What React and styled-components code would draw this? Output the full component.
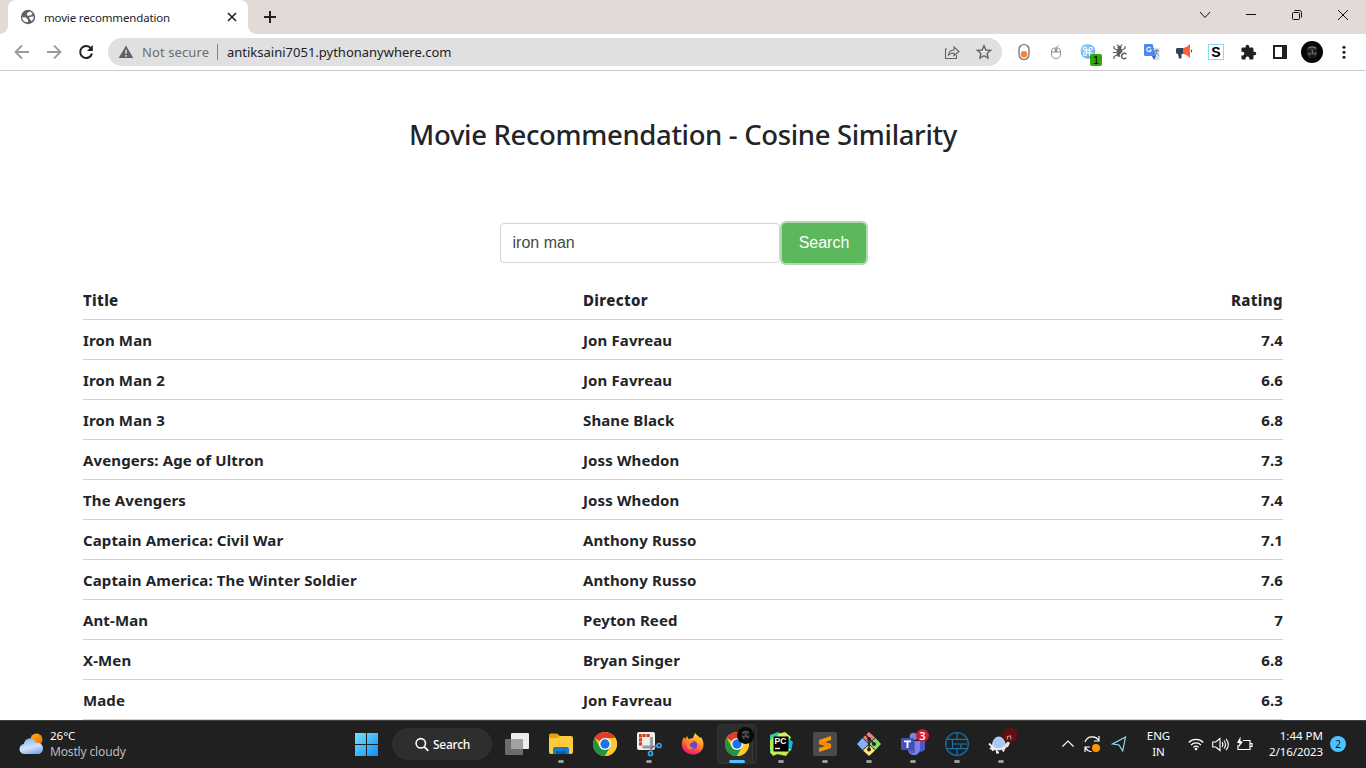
import React from 'react';
import styled, { createGlobalStyle } from 'styled-components';

const GlobalStyle = createGlobalStyle`
  *, *::before, *::after { box-sizing: border-box; }
  body { margin: 0; overflow: hidden; background: #fff; }
`;

const ui = `"Segoe UI", "Noto Sans", "Open Sans", sans-serif`;

const Screen = styled.div`
  display: flex;
  flex-direction: column;
  width: 1366px;
  height: 768px;
  overflow: hidden;
  font-family: ${ui};
  color: #212529;
`;

const Label = styled.span`
  font-size: ${(p) => p.$size || 12}px;
  font-weight: ${(p) => p.$weight || 400};
  letter-spacing: ${(p) => p.$track || 0}px;
  color: ${(p) => p.$color || 'inherit'};
  white-space: nowrap;
`;

/* ---------- browser chrome ---------- */

const TabStrip = styled.div`
  display: flex;
  height: 34px;
  flex: none;
  padding-left: 8px;
  background: #e3dad7;
`;

const Tab = styled.div`
  position: relative;
  display: flex;
  align-items: center;
  width: 240px;
  padding: 0 10px 0 12px;
  background: #fff;
  border-radius: 8px 8px 0 0;
  &::before, &::after {
    content: '';
    position: absolute;
    bottom: 0;
    width: 8px;
    height: 8px;
  }
  &::before { left: -8px; background: radial-gradient(circle at 0 0, transparent 7.5px, #fff 8px); }
  &::after { right: -8px; background: radial-gradient(circle at 100% 0, transparent 7.5px, #fff 8px); }
`;

const TabTitle = styled.div`
  flex: 1;
  padding: 0 0 1px 8px;
  line-height: 16px;
`;

const NewTab = styled.div`
  display: grid;
  place-items: center;
  width: 44px;
`;

const WindowControls = styled.div`
  display: flex;
  height: 29px;
  margin-left: auto;
`;

const ControlSlot = styled.div`
  display: grid;
  place-items: center;
  width: 46px;
`;

const Toolbar = styled.div`
  display: flex;
  align-items: center;
  height: 37px;
  flex: none;
  padding-left: 6px;
  background: #fff;
  border-bottom: 1px solid #c8c8c8;
`;

const Slot = styled.div`
  position: relative;
  display: grid;
  place-items: center;
  width: 32px;
  height: 32px;
`;

const AddressBar = styled.div`
  display: flex;
  align-items: center;
  width: 894px;
  height: 28px;
  margin: 0 6px;
  padding: 0 2px 0 10px;
  border-radius: 14px;
  background: #e0e0e0;
`;

const SecurityChip = styled.div`
  display: flex;
  align-items: center;
  width: 100px;
  height: 16px;
  gap: 8px;
  border-right: 1px solid #85868a;
`;

const Url = styled.div`
  flex: 1;
  padding: 0 0 2px 9px;
`;

const CountBadge = styled.span`
  position: absolute;
  left: 18px;
  top: 18px;
  width: 12px;
  height: 12px;
  border-radius: 2px;
  background: #35a30d;
  color: #000;
  font: 11px/12px "Liberation Sans", sans-serif;
  text-align: center;
`;

const LetterTile = styled.div`
  display: grid;
  place-items: center;
  width: 16px;
  height: 16px;
  border: 1px solid #86dcf5;
  background: #fff;
  color: #000;
  font: bold 14px/14px "Liberation Sans", sans-serif;
`;

/* ---------- page ---------- */

const Page = styled.main`
  flex: 1;
  display: flex;
  flex-direction: column;
  align-items: center;
  min-height: 0;
  overflow: hidden;
`;

const Heading = styled.h1`
  margin: 47px 0 0;
  height: 34px;
  font-size: 27.5px;
  line-height: 34px;
  font-weight: 500;
  letter-spacing: -0.34px;
  white-space: nowrap;
`;

const SearchForm = styled.form`
  display: flex;
  gap: 2px;
  margin: 71px 0 17px;
`;

const SearchInput = styled.input`
  width: 280px;
  height: 40px;
  padding: 0 12px;
  border: 1px solid #d4d4d4;
  border-radius: 4px;
  outline: none;
  background: #fff;
  color: #464a4c;
  font: 16px "Liberation Sans", Arial, sans-serif;
`;

const SearchButton = styled.button`
  width: 84px;
  height: 40px;
  margin-right: 1px;
  padding: 0 0 0 1px;
  border: 1px solid #5cb85c;
  border-radius: 4px;
  background: #5cb85c;
  box-shadow: 0 0 0 2px rgba(92, 184, 92, 0.5);
  color: #fff;
  font: 16px "Liberation Sans", Arial, sans-serif;
`;

const Table = styled.div`
  width: 1200px;
`;

const TableRow = styled.div`
  display: grid;
  grid-template-columns: 500px 500px 200px;
  height: 40px;
  border-bottom: 1px solid #cfd0d1;
  font-size: 15px;
  line-height: 40px;
  font-weight: ${(p) => (p.$head ? 800 : 700)};
  letter-spacing: ${(p) => (p.$head ? 0.34 : 0.12)}px;
  white-space: nowrap;
`;

const Cell = styled.div`
  text-align: ${(p) => (p.$right ? 'right' : 'left')};
`;

/* ---------- taskbar ---------- */

const Taskbar = styled.footer`
  display: flex;
  align-items: stretch;
  height: 48px;
  flex: none;
  background: #202020;
  border-top: 1px solid #424242;
  color: #fff;
`;

const Weather = styled.div`
  display: flex;
  align-items: center;
  width: 344px;
  gap: 6px;
  padding: 0 0 1px 19px;
`;

const Stack = styled.div`
  display: flex;
  flex-direction: column;
  align-items: ${(p) => p.$align || 'flex-start'};
  line-height: 16px;
`;

const AppSlot = styled.div`
  position: relative;
  display: grid;
  place-items: center;
  width: 44px;
  height: 47px;
  padding-bottom: 1px;
  &::after {
    content: '';
    position: absolute;
    bottom: 5px;
    left: ${(p) => (p.$active ? 14 : 19)}px;
    width: ${(p) => (p.$active ? 16 : 6)}px;
    height: 3px;
    border-radius: 2px;
    background: ${(p) => (p.$active ? '#4cc2ff' : '#9a9a9a')};
    display: ${(p) => (p.$running || p.$active ? 'block' : 'none')};
  }
`;

const ActivePlate = styled.div`
  position: absolute;
  left: 2px;
  top: 3px;
  width: 40px;
  height: 40px;
  border: 1px solid #343434;
  border-radius: 4px;
  background: linear-gradient(90deg, #2d2d2d 34px, #383838 34px, #383838 35px, #272727 35px);
`;

const Art = styled.svg`
  position: relative;
  display: block;
  overflow: visible;
`;

const SearchPill = styled.div`
  display: flex;
  align-items: center;
  justify-content: center;
  gap: 4px;
  width: 100px;
  height: 32px;
  margin: 7px 3px 0 4px;
  border-radius: 16px;
  background: #2e2e2e;
`;

const AlertBadge = styled.span`
  position: absolute;
  left: 25px;
  top: 8px;
  width: 13px;
  height: 13px;
  border-radius: 50%;
  background: #d01a37;
  color: #fff;
  font-size: 11px;
  font-weight: 600;
  line-height: 13px;
  text-align: center;
`;

const Tray = styled.div`
  display: flex;
  align-items: center;
  margin-left: auto;
  padding: 0 20px 1px 0;
`;

const TraySlot = styled.div`
  display: grid;
  place-items: center;
  width: ${(p) => p.$w}px;
`;

const Clock = styled.div`
  display: flex;
  justify-content: flex-end;
  width: 66px;
`;

const NoticeCount = styled.span`
  width: 16px;
  height: 16px;
  margin-left: 7px;
  border-radius: 50%;
  background: #4cc2ff;
  color: #111;
  font-size: 10px;
  line-height: 16px;
  text-align: center;
`;

/* ---------- drawings ---------- */

const Svg = ({ w = 16, h, box, children, ...rest }) => (
  <Art width={w} height={h || w} viewBox={box || `0 0 ${w} ${h || w}`} fill="none" {...rest}>
    {children}
  </Art>
);

const Globe = () => (
  <Svg w={16}>
    <circle cx="8" cy="8" r="7.2" fill="#5f6368" />
    <path d="M2 8.300h3c1.500 0 1.500 2 3 2.200v2.700c-3.200.4-5.800-1.700-6-4.900zM7 5.300c0-1.700 1.200-2.600 3.500-2.500.8.500 1.600 1.200 2 2L11 6.200H9.500c-.3 1.300-2.500.8-2.500-.9zM9 8.300l3.500-.8h1.300c.1 2-.9 3.700-2.400 4.700-.2-1.700-2.300-1.600-2.400-3.900z" fill="#fff" />
  </Svg>
);

const Chrome = () => (
  <Svg w={24} box="0 0 48 48">
    <circle cx="24" cy="24" r="24" fill="#fbc116" />
    <path d="M24 24 3.200 12A24 24 0 0 1 44.800 12H24z" fill="#e33b2e" />
    <path d="M3.200 12A24 24 0 0 0 24 48l10.400-18L24 24 13.600 30z" fill="#229342" />
    <path d="M24 12h20.800A24 24 0 0 1 24 48l10.400-18z" fill="#fcc934" />
    <circle cx="24" cy="24" r="12" fill="#fff" />
    <circle cx="24" cy="24" r="9.300" fill="#1a73e8" />
  </Svg>
);

const Face = ({ size }) => (
  <Svg w={size} box="0 0 22 22">
    <circle cx="11" cy="11" r="11" fill="#070707" />
    <path d="M6 7c2-2.500 7-2.800 10 0l.3 5.500c-.7 2.500-2 4.700-5 5-3.200-.3-4.600-2.500-5.100-5.500z" fill="#333" />
    <path d="M6.500 9.800l3.500.6M12.500 10.400l3.500-.7" stroke="#080808" strokeWidth="1.300" />
    <path d="M7.500 6.900l3.500-1 4 1M11.400 9.500v3.800M7 12.500l2.300.8M13 13l2-.5" stroke="#858585" strokeWidth=".9" />
    <path d="M9 14.500c1.500-.7 3.500-.7 5 0l-.8 2.700h-3z" fill="#111" />
  </Svg>
);

const extensions = [
  <Svg w={16} h={18} key="toggle">
    <rect x="3" y="1.500" width="10" height="15" rx="5" fill="#fff" stroke="#666" strokeWidth="1.200" />
    <circle cx="8" cy="11.300" r="3.300" fill="#f58233" />
  </Svg>,
  <Svg w={16} key="mouse">
    <path d="M3.500 6.500c0-1.600 1.500-2.500 4.500-2.500s4.500.9 4.500 2.500V10c0 3-2 4.700-4.500 4.700S3.500 13 3.500 10zM3.500 8h9M8 4v4M8 4c0-1.500 2.500-1 2.500-2.500M7 5.500h2v2H7z" stroke="#777" strokeWidth=".8" />
  </Svg>,
  <Svg w={16} key="command">
    <circle cx="8" cy="7.500" r="7.300" fill="#6cb9ee" />
    <circle cx="5.500" cy="5" r="5" fill="#99d4fa" opacity=".55" />
    <path d="M6.500 6V4.700A1.500 1.500 0 1 0 5 6.200h6a1.500 1.500 0 1 0-1.500-1.500v4.600A1.500 1.500 0 1 0 11 8.800H5a1.500 1.500 0 1 0 1.500 1.500z" stroke="#fff" strokeWidth="1.100" />
  </Svg>,
  <Svg w={16} key="bug">
    <ellipse cx="7.500" cy="8.500" rx="3" ry="4.500" fill="#665d55" />
    <circle cx="7.500" cy="3.500" r="2" fill="#665d55" />
    <path d="M5 6 2 4.500V2M4.500 8.500H.8M5 11l-3 1.500V15M10 6l3-1.500V2M10 8.500h4M6 2 5 .5M9 2l1-1.500" stroke="#665d55" strokeWidth="1.200" />
    <path d="M14.500 10.300a2.800 2.800 0 1 0 0 3.500" stroke="#fff" strokeWidth="3.500" />
    <path d="M14.300 10.300a2.700 2.700 0 1 0 0 3.500" stroke="#665d55" strokeWidth="1.500" />
  </Svg>,
  <Svg w={16} key="translate">
    <path d="M6 4h9.500v12H10z" fill="#d8dbe0" />
    <path d="M1 0h7.500l3.500 12H1a1 1 0 0 1-1-1V1a1 1 0 0 1 1-1z" fill="#4b89f2" />
    <path d="m8 12h4l-2.200 4z" fill="#2762ce" />
    <path d="M6.800 4.200a2.200 2.200 0 1 0 .3 2H5.200" stroke="#fff" strokeWidth="1.100" />
    <path d="M11 6.500h4M13 5.300v1.200c0 2-1 3.700-2 4.500M11.500 7c.7 2 1.800 3.300 3 4.200" stroke="#6e8298" />
  </Svg>,
  <Svg w={18} key="megaphone">
    <path d="M1 6.500C1 5.300 2 5 3 5h5v6H6.500v4.500H4L3 11C1.500 11 1 10 1 9z" fill="#2e4358" />
    <path d="M8 5c3-.2 4.500-2 7-4v14c-2.500-2-4-3.800-7-4z" fill="#fb6435" />
    <path d="M16 6.500c1.600 0 1.600 3 0 3z" fill="#2e4358" />
  </Svg>,
  <LetterTile key="s">S</LetterTile>,
  <Svg w={17} box="0 0 24 24" key="puzzle">
    <path d="M20.500 11H19V7a2 2 0 0 0-2-2h-4V3.500a2.500 2.500 0 0 0-5 0V5H4a2 2 0 0 0-2 2v3.800h1.500a2.700 2.700 0 0 1 0 5.400H2V20a2 2 0 0 0 2 2h3.800v-1.500a2.700 2.700 0 0 1 5.400 0V22H17a2 2 0 0 0 2-2v-4h1.500a2.500 2.500 0 0 0 0-5z" fill="#202124" />
  </Svg>,
  <Svg w={14} key="panel">
    <rect x="1" y="1" width="12" height="12" stroke="#202124" strokeWidth="2" />
    <path d="M9 1h4v12H9z" fill="#202124" />
  </Svg>,
  <Face size={22} key="profile" />,
  <Svg w={4} h={16} key="menu">
    <g fill="#202124"><circle cx="2" cy="3.300" r="1.550" /><circle cx="2" cy="8.300" r="1.550" /><circle cx="2" cy="13.300" r="1.550" /></g>
  </Svg>,
];

const apps = [
  { id: 'folder', running: true, art: (
    <Svg w={24}>
      <path d="M0 3.500C0 2 1 1.500 2 1.500h6l2.500 2V8H0z" fill="#e8a20c" />
      <path d="M0 6h8.500l2-2H22q2 0 2 2v14q0 2-2 2H2q-2 0-2-2z" fill="#ffcb3d" />
      <path d="M4 22v-5q0-2 2-2h12q2 0 2 2v5z" fill="#137bcd" />
      <path d="M7 19h10v3H7z" fill="#0a5ca5" />
    </Svg>) },
  { id: 'chrome', art: <Chrome /> },
  { id: 'snip', running: true, art: (
    <Svg w={26} h={24}>
      <rect x="1" y="0" width="18" height="18" rx="2" fill="#eeeeee" />
      <path d="M4.500 13.500V3.500H14" stroke="#d83b12" strokeWidth="3" strokeDasharray="3.200 .8" />
      <path d="M15.500 5v10h-9" stroke="#9a9a9a" strokeWidth="3" />
      <path d="m15 15 6-1M15.500 15l-.5 5" stroke="#747d84" strokeWidth="2" />
      <circle cx="23" cy="13.500" r="2" stroke="#2da5ec" strokeWidth="1.700" />
      <circle cx="14.500" cy="21.500" r="2" stroke="#2da5ec" strokeWidth="1.700" />
    </Svg>) },
  { id: 'firefox', art: (
    <Svg w={24}>
      <defs>
        <linearGradient id="fire" x1="18" y1="1" x2="8" y2="23" gradientUnits="userSpaceOnUse">
          <stop stopColor="#ffe14c" /><stop offset=".4" stopColor="#ff9a24" /><stop offset=".75" stopColor="#ff3f4a" /><stop offset="1" stopColor="#e31587" />
        </linearGradient>
      </defs>
      <path d="M3 5l1.300 2L6 4l1.500 3L12 6l2-5c1 2 4 3 5 5l1-1c4 6 3 12-1 15-5 4-12 3-15.500-1S0 10 3 5z" fill="url(#fire)" />
      <circle cx="12" cy="13" r="4.300" fill="#7540cf" />
      <path d="M5 9c3-2 5 0 8 0-1 2-3 1.500-4 3-1 2 1 4 3.500 3.500-4 4-8 0-7.500-6.500z" fill="#ff8a2b" />
    </Svg>) },
  { id: 'browser', active: true, art: <Chrome /> },
  { id: 'pycharm', running: true, art: (
    <Svg w={24}>
      <path d="m1 3 8-3 7 4-1 9-8 10-6-2z" fill="#2ec99b" />
      <path d="m9 2 7-2 6 5-2 4H8z" fill="#d8ee53" />
      <path d="m19 6 5 4-2 9-5-2z" fill="#18b7dd" />
      <path d="m1 20 5-5 16 2-5 7-9-2-4 2z" fill="#c3ec56" />
      <path d="m1 9 4-6v15H1z" fill="#b3ea50" />
      <path d="M4.500 4.500h15v15h-15z" fill="#000" />
      <text x="5.500" y="12" fill="#fff" fontFamily="Liberation Sans" fontWeight="700" fontSize="8.500">PC</text>
      <path d="M6 16.500h5" stroke="#fff" strokeWidth="1.300" />
    </Svg>) },
  { id: 'sublime', running: true, art: (
    <Svg w={24}>
      <rect width="24" height="24" rx="2" fill="#4b4b4b" />
      <path d="m6 8 12-4v4l-6.500 2L18 12v4L6 20v-4l6.500-2L6 12z" fill="#ff9800" />
      <path d="m6 8 12 4v4L6 12z" fill="#f08c00" />
    </Svg>) },
  { id: 'git', running: true, art: (
    <Svg w={24}>
      <path d="m12 0 6 5.500-6 6-6-6z" fill="#f08080" />
      <path d="m5.500 6 6 6-6 6L0 12z" fill="#80b3ff" />
      <path d="m18.500 6L24 12l-5.500 6-6-6z" fill="#87de64" />
      <path d="m12 12.500 6 6L12 24l-6-5.500z" fill="#ffe680" />
      <path d="M7.500 1.500 12 6.500v11M12 6.500l5 5.500" stroke="#2b2422" strokeWidth="1.600" />
      <circle cx="12" cy="7" r="2" fill="#2b2422" /><circle cx="17" cy="12" r="2" fill="#2b2422" /><circle cx="12" cy="17.500" r="2" fill="#2b2422" />
    </Svg>) },
  { id: 'teams', running: true, badge: '3', art: (
    <Svg w={24}>
      <circle cx="12.500" cy="4.500" r="3.800" fill="#7b83eb" />
      <path d="M17 9h7v8q-2 4-6 2z" fill="#5059c9" />
      <path d="M7 9h12v8c0 8-12 8-12 0z" fill="#7b83eb" />
      <path d="M7 9h7v12c-4 1-7-1-7-5z" fill="#555ec2" />
      <rect y="6" width="13" height="12" rx="1" fill="#4350b8" />
      <path d="M3 9.300h7M6.500 9v7" stroke="#fff" strokeWidth="1.800" />
    </Svg>) },
  { id: 'web', running: true, art: (
    <Svg w={24}>
      <circle cx="12" cy="12" r="11.300" stroke="#1672ad" strokeWidth="1.300" />
      <path d="M2 7.300h20M7.500 12H22.500M2 16.700h20M7.500 7.300v9.400M16 12v4.700M12 1v6.300M12 16.700V23" stroke="#1672ad" strokeWidth="1.200" />
    </Svg>) },
  { id: 'turtle', running: true, art: (
    <Svg w={28} h={24}>
      <path d="M5 14h14l-1 4-3-1-2 1.500-3-1-4 1-2-2z" fill="#f3f2ef" />
      <path d="M7 16.500 5 18.500M9.500 17l.5 3.500h2M15 17l2 2.500M2 11.500l3.500 3.500M3 17l3-2" stroke="#f4f2ee" strokeWidth="1.900" />
      <path d="M5.500 14c0-12 12-12 13 0l-5 2.500H9z" fill="#a8c8fb" stroke="#e8eefb" strokeWidth=".8" />
      <path d="m17 14 4-5 2 2-2 4-3 1z" fill="#e9e4dd" />
      <circle cx="23" cy="3" r="7.300" fill="#650e12" />
      <path d="M20.500 7.500V4.500l3-.5.500 3.500" stroke="#a58f98" strokeWidth="1.200" />
    </Svg>) },
];

const ProfileMark = styled.div`
  position: absolute;
  left: 22px;
  top: 6px;
`;

const movies = [
  ['Iron Man', 'Jon Favreau', '7.4'],
  ['Iron Man 2', 'Jon Favreau', '6.6'],
  ['Iron Man 3', 'Shane Black', '6.8'],
  ['Avengers: Age of Ultron', 'Joss Whedon', '7.3'],
  ['The Avengers', 'Joss Whedon', '7.4'],
  ['Captain America: Civil War', 'Anthony Russo', '7.1'],
  ['Captain America: The Winter Soldier', 'Anthony Russo', '7.6'],
  ['Ant-Man', 'Peyton Reed', '7'],
  ['X-Men', 'Bryan Singer', '6.8'],
  ['Made', 'Jon Favreau', '6.3'],
];

const BrowserChrome = () => (
  <>
    <TabStrip>
      <Tab>
        <Globe />
        <TabTitle><Label $size={11.5} $track={-0.15}>movie recommendation</Label></TabTitle>
        <Svg w={12}><path d="m2 2 8 8M10 2l-8 8" stroke="#202124" strokeWidth="1.600" /></Svg>
      </Tab>
      <NewTab><Svg w={12}><path d="M6 0v12M0 6h12" stroke="#202124" strokeWidth="2" /></Svg></NewTab>
      <WindowControls>
        <ControlSlot><Svg w={12}><path d="m1 3 5 5.500L11 3" stroke="#111" /></Svg></ControlSlot>
        <ControlSlot><Svg w={10}><path d="M0 4.500h10" stroke="#111" /></Svg></ControlSlot>
        <ControlSlot><Svg w={10}><rect x=".5" y="2.500" width="7" height="7" rx="1" stroke="#111" /><path d="M2.500.5h5q2 0 2 2v5" stroke="#111" /></Svg></ControlSlot>
        <ControlSlot><Svg w={10}><path d="m0 0 10 10M10 0 0 10" stroke="#111" /></Svg></ControlSlot>
      </WindowControls>
    </TabStrip>
    <Toolbar>
      <Slot><Svg w={16}><path d="M15 8H2M8 1.500 1.500 8 8 14.500" stroke="#9b9b9b" strokeWidth="1.800" /></Svg></Slot>
      <Slot><Svg w={16}><path d="M1 8h13M8 1.500 14.500 8 8 14.500" stroke="#9b9b9b" strokeWidth="1.800" /></Svg></Slot>
      <Slot><Svg w={16}><path d="M13 4.500A6 6 0 1 0 14 9.500" stroke="#202124" strokeWidth="2" /><path d="M14.800 1v6H9z" fill="#202124" /></Svg></Slot>
      <AddressBar>
        <SecurityChip>
          <Svg w={16}><path d="M8 1.500 15.300 14H.7z" fill="#5f6368" /><path d="M8 5.800v4M8 11v1.700" stroke="#e0e0e0" strokeWidth="1.500" /></Svg>
          <Label $size={13} $color="#6c6e71" $track={0.1}>Not secure</Label>
        </SecurityChip>
        <Url><Label $size={13} $color="#202124">antiksaini7051.pythonanywhere.com</Label></Url>
        <Slot>
          <Svg w={16}><path d="M3 5H1.500v9.500h11V11M4.500 11c.5-3.500 2.500-5 5.500-5V3l5 4.500-5 4V9c-2.500 0-4 .5-5.500 2z" stroke="#5f6368" strokeWidth="1.100" /></Svg>
        </Slot>
        <Slot>
          <Svg w={16}><path d="m8 1.700 1.900 4.300 4.700.4-3.500 3.100 1 4.600L8 11.700l-4.100 2.400 1-4.600-3.500-3.100 4.700-.4z" stroke="#5f6368" strokeWidth="1.400" /></Svg>
        </Slot>
      </AddressBar>
      {extensions.map((art, i) => (
        <Slot key={i}>{art}{i === 2 && <CountBadge>1</CountBadge>}</Slot>
      ))}
    </Toolbar>
  </>
);

const TaskbarRow = () => (
  <Taskbar>
    <Weather>
      <Svg w={25} h={22}>
        <defs>
          <linearGradient id="sun" x1="12" y1="0" x2="22" y2="12" gradientUnits="userSpaceOnUse"><stop stopColor="#ffb51d" /><stop offset="1" stopColor="#ed6c08" /></linearGradient>
          <linearGradient id="cloud" x1="10" y1="6" x2="14" y2="21" gradientUnits="userSpaceOnUse"><stop stopColor="#8fb9f5" /><stop offset=".55" stopColor="#d2e3fb" /><stop offset="1" stopColor="#82acf0" /></linearGradient>
        </defs>
        <circle cx="17.500" cy="6.500" r="6" fill="url(#sun)" />
        <path d="M6 21a5 5 0 0 1-1-10C6 4 15 4 17 10c4-1 7 2 7 5.500 0 3-2 5.500-5 5.500z" fill="url(#cloud)" />
      </Svg>
      <Stack>
        <Label $size={11.5}>26°C</Label>
        <Label $size={12} $color="#bdbdbd" $track={-0.15}>Mostly cloudy</Label>
      </Stack>
    </Weather>
    <AppSlot>
      <Svg w={24}>
        <defs><linearGradient id="win" x1="0" y1="0" x2="24" y2="24" gradientUnits="userSpaceOnUse"><stop stopColor="#7be3ff" /><stop offset="1" stopColor="#0b91f5" /></linearGradient></defs>
        <path d="M1 1h11v11H1zM13 1h11v11H13zM1 13h11v11H1zM13 13h11v11H13z" fill="url(#win)" />
      </Svg>
    </AppSlot>
    <SearchPill>
      <Svg w={15}><circle cx="6.800" cy="6.300" r="4.700" stroke="#fff" strokeWidth="1.600" /><path d="m10.300 9.800 4 4" stroke="#fff" strokeWidth="1.800" /></Svg>
      <Label $size={12} $weight={500} $track={-0.25}>Search</Label>
    </SearchPill>
    <AppSlot>
      <Svg w={24} h={22}>
        <rect x="6" y="0" width="18" height="16" rx="1" fill="#ededed" />
        <rect x="0" y="6" width="18" height="16" rx="1" fill="#6c6c6c" />
        <path d="M6 6h12v10H6z" fill="#a2a2a2" />
      </Svg>
    </AppSlot>
    {apps.map((app) => (
      <AppSlot key={app.id} $running={app.running} $active={app.active}>
        {app.active && <ActivePlate />}
        {app.art}
        {app.active && <ProfileMark><Face size={17} /></ProfileMark>}
        {app.badge && <AlertBadge>{app.badge}</AlertBadge>}
      </AppSlot>
    ))}
    <Tray>
      <TraySlot $w={24}><Svg w={12}><path d="M.5 8.500 6 3l5.500 5.500" stroke="#fff" strokeWidth="1.200" /></Svg></TraySlot>
      <TraySlot $w={24}>
        <Svg w={18}>
          <path d="M2 7C4 1 12 0 15.500 5M16 1v5h-5M7 12H2v5M2.500 12.500c1 2.500 3 4 6 4" stroke="#fff" strokeWidth="1.200" />
          <circle cx="13" cy="13" r="4" fill="#ff9800" />
        </Svg>
      </TraySlot>
      <TraySlot $w={30}><Svg w={16}><path d="M14.500 1 1.500 8l6.500 1 3.700 6z" stroke="#8ce0ee" strokeWidth="1.200" /></Svg></TraySlot>
      <TraySlot $w={49}>
        <Stack $align="center"><Label $size={11.5}>ENG</Label><Label $size={11.5}>IN</Label></Stack>
      </TraySlot>
      <TraySlot $w={26}>
        <Svg w={16}>
          <path d="M.7 6.500a10.300 10.300 0 0 1 14.600 0M3 9a7 7 0 0 1 10 0M5.300 11.400a3.900 3.900 0 0 1 5.400 0" stroke="#fff" strokeWidth="1.200" />
          <circle cx="8" cy="13" r="1.300" fill="#fff" />
        </Svg>
      </TraySlot>
      <TraySlot $w={23}>
        <Svg w={17}><path d="M.7 6h3L8 2.500v12L3.700 11h-3zM10 6.200q1.800 2.300 0 4.600M12 4.500q3 4 0 8M14 2.800q4.500 5.700 0 11.400" stroke="#fff" strokeWidth="1.100" /></Svg>
      </TraySlot>
      <TraySlot $w={25}>
        <Svg w={17}><path d="M7 4.500h7v9H2V9M14.500 7.500H16v3h-1.500" stroke="#fff" strokeWidth="1.200" /><path d="M4.500.5 1 7h2.500L2.500 11.500 7 5.500H4.500z" fill="#fff" /></Svg>
      </TraySlot>
      <Clock>
        <Stack $align="flex-end"><Label $size={11.5}>1:44 PM</Label><Label $size={11.5} $track={-0.08}>2/16/2023</Label></Stack>
      </Clock>
      <NoticeCount>2</NoticeCount>
    </Tray>
  </Taskbar>
);

export default function App() {
  return (
    <>
      <GlobalStyle />
      <Screen>
        <BrowserChrome />
        <Page>
          <Heading>Movie Recommendation - Cosine Similarity</Heading>
          <SearchForm onSubmit={(e) => e.preventDefault()}>
            <SearchInput defaultValue="iron man" />
            <SearchButton>Search</SearchButton>
          </SearchForm>
          <Table>
            <TableRow $head><Cell>Title</Cell><Cell>Director</Cell><Cell $right>Rating</Cell></TableRow>
            {movies.map(([title, director, rating]) => (
              <TableRow key={title}><Cell>{title}</Cell><Cell>{director}</Cell><Cell $right>{rating}</Cell></TableRow>
            ))}
          </Table>
        </Page>
        <TaskbarRow />
      </Screen>
    </>
  );
}
